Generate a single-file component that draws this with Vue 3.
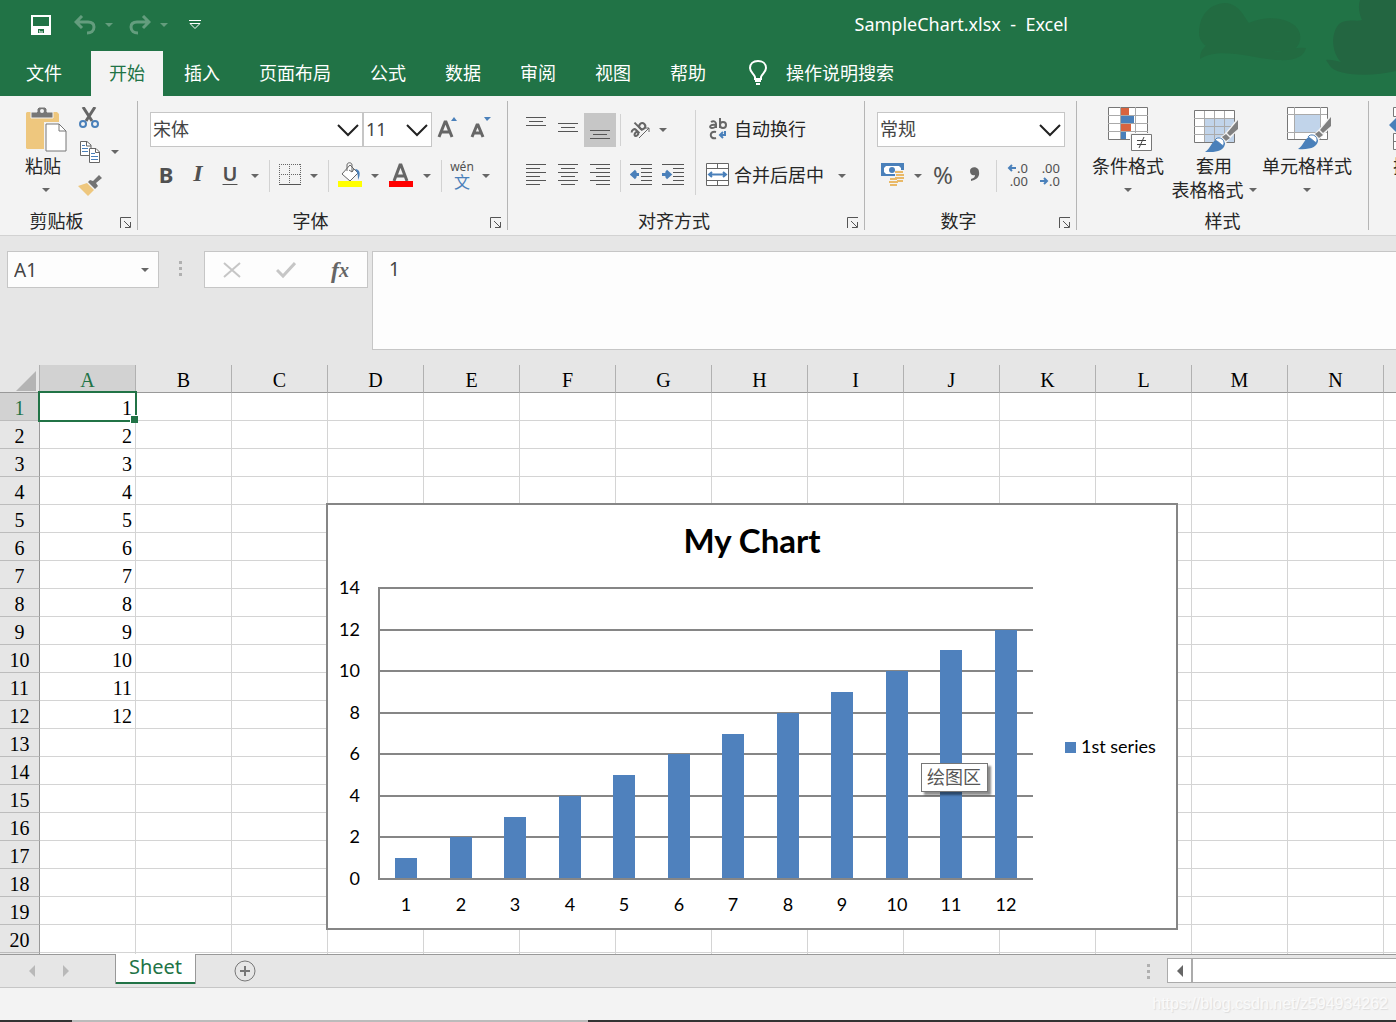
<script setup>
import { ref } from 'vue'

const tabs = ['文件', '开始', '插入', '页面布局', '公式', '数据', '审阅', '视图', '帮助']
const activeTab = ref('开始')
const columns = ['A', 'B', 'C', 'D', 'E', 'F', 'G', 'H', 'I', 'J', 'K', 'L', 'M', 'N']
const rows = Array.from({ length: 20 }, (_, i) => i + 1)
const values = [1, 2, 3, 4, 5, 6, 7, 8, 9, 10, 11, 12]
const cellName = ref('A1')
const formula = ref('1')

const base = 374
const unit = 291 / 14
const ticks = [0, 2, 4, 6, 8, 10, 12, 14].map((v) => ({ v, y: Math.round(base - v * unit) }))
const bars = values.map((v, i) => ({
  v,
  x: Math.round(67 + i * 54.5),
  y: Math.round(base - v * unit),
}))
</script>

<template>
  <div class="app">
    <header class="top">
      <svg class="swirl" width="250" height="96" viewBox="0 0 250 96" aria-hidden="true">
        <path d="M53 32C54 14 64 4 79 3C93 4 97 15 103 23C114 18 130 16 143 22C156 28 157 40 150 48C145 52 135 51 126 52C139 53 147 46 160 48C158 57 148 61 132 60C108 59 74 46 54 59C54 52 57 48 60 46C55 42 53 38 53 32Z" fill="#226b41" />
        <path d="M214 0H250V71C226 77 190 76 184 66L180 60C184 59 190 61 195 62C186 53 184 34 193 24C200 18 210 22 216 20C213 13 212 6 214 0Z" fill="#236641" />
      </svg>
      <div class="titlebar">
        <div class="quick">
          <button aria-label="保存"><svg width="20" height="20" viewBox="0 0 20 20"><path d="M1 1H19V19H1Z" fill="none" stroke="#fff" stroke-width="2" /><path d="M1 11H19V20H13V14H7V20H1Z" fill="#fff" /><path d="M8 16H9V19H11V16" fill="none" stroke="#fff" /></svg></button>
          <button class="dim undo" aria-label="撤消"><svg width="22" height="20" viewBox="0 0 22 20"><path d="M8 1L2 7L8 13M3 7H14C18 7 20 9 20 12C20 16 17 18 13 18" fill="none" stroke="#fff" stroke-width="3" /></svg></button>
          <button class="dim drop" aria-label="撤消列表"><i class="caret light"></i></button>
          <button class="dim redo" aria-label="恢复"><svg width="22" height="20" viewBox="0 0 22 20"><path d="M14 1L20 7L14 13M19 7H8C4 7 2 9 2 12C2 16 5 18 9 18" fill="none" stroke="#fff" stroke-width="3" /></svg></button>
          <button class="dim drop" aria-label="恢复列表"><i class="caret light"></i></button>
          <button class="custom" aria-label="自定义快速访问工具栏"><svg width="12" height="10" viewBox="0 0 12 10"><path d="M0 .5H12M1 3.500H11L6 8.500Z" fill="none" stroke="#fff" /></svg></button>
        </div>
        <h1>SampleChart.xlsx&nbsp; -&nbsp; Excel</h1>
      </div>
      <nav class="tabs">
        <button v-for="t in tabs" :key="t" :class="{ active: t === activeTab, file: t === '文件' }" @click="activeTab = t">{{ t }}</button>
        <button class="search">
          <svg width="20" height="26" viewBox="0 0 20 26"><path d="M7 19V17C6 14 2 12 2 8C2 4 5 1 10 1S18 4 18 8C18 12 14 14 13 17V19Z" fill="none" stroke="#fff" stroke-width="2" /><path d="M7 21H13M8 24H12" stroke="#fff" stroke-width="2" /></svg>
          <span>操作说明搜索</span>
        </button>
      </nav>
    </header>

    <section class="ribbon">
      <div class="group clip">
        <div class="body">
          <button class="big paste">
            <svg width="42" height="45" viewBox="0 0 42 45">
              <path d="M2 5H32L34 7V42H2L1 41V6Z" fill="#eec77e" />
              <path d="M6 5H12V2L14 0H20L22 2V5H28V11H6Z" fill="#777" stroke="#f3f3f3" /><circle cx="17" cy="4" r="2" fill="#f3f3f3" />
              <path d="M19 15H36L42 21V45H19Z" fill="#f3f3f3" /><path d="M21 17H34L41 24V44H21Z" fill="#fff" stroke="#777" /><path d="M34 17V24H41" fill="none" stroke="#777" />
            </svg>
            <span>粘贴</span>
            <i class="caret"></i>
          </button>
          <div class="side">
            <button aria-label="剪切"><svg width="22" height="22" viewBox="0 0 22 22"><path d="M5 0L14 14M17 0L8 14" stroke="#666" stroke-width="3" /><circle cx="5" cy="17" r="3" fill="none" stroke="#4a80ba" stroke-width="2" /><circle cx="17" cy="17" r="3" fill="none" stroke="#4a80ba" stroke-width="2" /></svg></button>
            <div class="pair">
              <button aria-label="复制"><svg width="22" height="24" viewBox="0 0 22 24"><path d="M2.500 1.500H9L13 5V15.500H2.500Z" fill="#fff" stroke="#666" /><path d="M8.500 1V6H13" fill="none" stroke="#666" /><path d="M4 5.500H7M4 8.500H10M4 11.500H10" stroke="#4a80ba" /><path d="M11.500 8.500H18L21.500 12V22.500H11.500Z" fill="#fff" stroke="#666" /><path d="M17.500 8V12.500H21" fill="none" stroke="#666" /><path d="M13 13.500H17M13 16.500H20M13 19.500H20" stroke="#4a80ba" /></svg></button>
              <button class="drop" aria-label="复制选项"><i class="caret"></i></button>
            </div>
            <button aria-label="格式刷"><svg width="24" height="22" viewBox="0 0 24 22"><path d="M21 0L24 3L18 8L20 11L17 14L10 7L12 5L15 6Z" fill="#737373" /><path d="M9 8L16 15L10 21L0 11Z" fill="#eec77e" /></svg></button>
          </div>
        </div>
        <footer><span>剪贴板</span><button class="launch" aria-label="剪贴板设置"><svg width="12" height="12" viewBox="0 0 12 12"><path d="M.5 11V.5H11M4 4L10 10M10.500 5V10.500H5" fill="none" stroke="#555" /></svg></button></footer>
      </div>
      <i class="divider"></i>

      <div class="group font">
        <div class="rows">
          <div class="row">
            <label class="combo name"><select aria-label="字体"><option>宋体</option></select><svg width="22" height="14" viewBox="0 0 22 14"><path d="M1 2L11 12L21 2" fill="none" stroke="#222" stroke-width="2" /></svg></label>
            <label class="combo size"><select aria-label="字号"><option>11</option></select><svg width="22" height="14" viewBox="0 0 22 14"><path d="M1 2L11 12L21 2" fill="none" stroke="#222" stroke-width="2" /></svg></label>
            <button class="tool" aria-label="增大字号"><svg width="22" height="24" viewBox="0 0 22 24"><path d="M2 20L8 5H9L15 20M4 15H13" fill="none" stroke="#666" stroke-width="3" /><path d="M14 4L17 0L20 4Z" fill="#4a80ba" /></svg></button>
            <button class="tool" aria-label="减小字号"><svg width="22" height="24" viewBox="0 0 22 24"><path d="M3 20L8 8H9L14 20M5 16H12" fill="none" stroke="#666" stroke-width="3" /><path d="M15 0H22L18 4Z" fill="#4a80ba" /></svg></button>
          </div>
          <div class="row">
            <button class="tool bold">B</button>
            <button class="tool italic">I</button>
            <button class="tool under">U</button>
            <button class="drop" aria-label="下划线选项"><i class="caret"></i></button>
            <i class="sep"></i>
            <button class="tool slim" aria-label="边框"><svg width="22" height="22" viewBox="0 0 22 22"><path d="M0 .5H22M.5 0V22M21.500 0V22M0 10.500H22M10.500 0V22" fill="none" stroke="#666" stroke-dasharray="1 1" /><path d="M0 20.500H22" stroke="#555" /></svg></button>
            <button class="drop" aria-label="边框选项"><i class="caret"></i></button>
            <i class="sep"></i>
            <button class="tool" aria-label="填充颜色"><svg width="24" height="26" viewBox="0 0 24 26"><path d="M12 3L4 12L12 19L20 11Z" fill="#fff" stroke="#666" /><path d="M9 9V3C9 0 14 0 14 3V10M11 8L14 10L16 7" fill="none" stroke="#666" /><path d="M17 7C22 7 23 12 20 18C20 14 20 11 17 7Z" fill="#4a80ba" /><path d="M0 19H24V25H0Z" fill="#ff0" /></svg></button>
            <button class="drop" aria-label="填充颜色选项"><i class="caret"></i></button>
            <button class="tool wide" aria-label="字体颜色"><svg width="24" height="26" viewBox="0 0 24 26"><path d="M5 19L11 3H12L18 19M7 14H16" fill="none" stroke="#666" stroke-width="3" /><path d="M0 19H24V25H0Z" fill="#f00" /></svg></button>
            <button class="drop" aria-label="字体颜色选项"><i class="caret"></i></button>
            <i class="sep"></i>
            <button class="tool slim phon"><span>wén</span><b>文</b></button>
            <button class="drop" aria-label="拼音选项"><i class="caret"></i></button>
          </div>
        </div>
        <footer><span>字体</span><button class="launch" aria-label="字体设置"><svg width="12" height="12" viewBox="0 0 12 12"><path d="M.5 11V.5H11M4 4L10 10M10.500 5V10.500H5" fill="none" stroke="#555" /></svg></button></footer>
      </div>
      <i class="divider"></i>

      <div class="group align">
        <div class="split">
          <div class="rows left">
            <div class="row">
              <button class="tool" aria-label="顶端对齐"><svg width="22" height="26" viewBox="0 0 22 26"><path d="M1 1.500H21M4 5.500H18M1 9.500H21" stroke="#555" /></svg></button>
              <button class="tool" aria-label="垂直居中"><svg width="22" height="26" viewBox="0 0 22 26"><path d="M1 7.500H21M4 11.500H18M1 15.500H21" stroke="#555" /></svg></button>
              <button class="tool chosen" aria-label="底端对齐"><svg width="22" height="26" viewBox="0 0 22 26"><path d="M1 13.500H21M4 17.500H18M1 21.500H21" stroke="#555" /></svg></button>
              <i class="sep near"></i>
              <button class="tool" aria-label="方向"><svg width="24" height="24" viewBox="0 0 24 24"><g transform="rotate(-45 9 12)" fill="none" stroke="#666" stroke-width="2"><path d="M2 10C4 8 7 9 7 11V16M7 13C1 12 1 16 4 16C6 16 7 15 7 13M11 5V16" /><circle cx="14" cy="13" r="3" /></g><path d="M10 21L20 11M16 11H20V15" fill="none" stroke="#666" /></svg></button>
              <button class="drop tight" aria-label="方向选项"><i class="caret"></i></button>
            </div>
            <div class="row">
              <button class="tool" aria-label="左对齐"><svg width="22" height="22" viewBox="0 0 22 22"><path d="M1 .5H21M1 4.500H15M1 8.500H21M1 12.500H15M1 16.500H21M1 20.500H15" stroke="#555" /></svg></button>
              <button class="tool" aria-label="居中"><svg width="22" height="22" viewBox="0 0 22 22"><path d="M1 .5H21M4 4.500H18M1 8.500H21M4 12.500H18M1 16.500H21M4 20.500H18" stroke="#555" /></svg></button>
              <button class="tool" aria-label="右对齐"><svg width="22" height="22" viewBox="0 0 22 22"><path d="M1 .5H21M7 4.500H21M1 8.500H21M7 12.500H21M1 16.500H21M7 20.500H21" stroke="#555" /></svg></button>
              <i class="sep near"></i>
              <button class="tool" aria-label="减少缩进量"><svg width="22" height="22" viewBox="0 0 22 22"><path d="M0 .5H22M11 4.500H22M11 8.500H22M11 12.500H22M11 16.500H22M0 20.500H22" stroke="#555" /><path d="M9 10.500H3M6 7L2 10.500L6 14" stroke="#4a80ba" stroke-width="3" fill="none" /></svg></button>
              <button class="tool" aria-label="增加缩进量"><svg width="22" height="22" viewBox="0 0 22 22"><path d="M0 .5H22M11 4.500H22M11 8.500H22M11 12.500H22M11 16.500H22M0 20.500H22" stroke="#555" /><path d="M0 10.500H7M4 7L8 10.500L4 14" stroke="#4a80ba" stroke-width="3" fill="none" /></svg></button>
            </div>
          </div>
          <i class="tall"></i>
          <div class="rows">
            <button class="row text"><svg width="24" height="24" viewBox="0 0 24 24"><g fill="none" stroke="#666" stroke-width="2"><path d="M5 5C8 3 10 5 10 7V11M10 8C3 7 3 11 6 11C9 11 10 9 10 8M14 1V11" /><circle cx="17" cy="8" r="3" /><path d="M10 15C3 13 3 23 10 21" stroke-width="2" /></g><path d="M19 14V18H14M17 15L14 18L17 21" fill="none" stroke="#4a80ba" stroke-width="2" /></svg><span>自动换行</span></button>
            <div class="row">
              <button class="row text"><svg width="24" height="24" viewBox="0 0 24 24"><path d="M.5 .5H22.500V22.500H.5ZM.5 5.500H22.500M.5 17.500H22.500M11.500 0V5M11.500 18V23" fill="#fff" stroke="#666" /><path d="M3 11.500H20M6 9L3 11.500L6 14M17 9L20 11.500L17 14" fill="none" stroke="#4a80ba" stroke-width="2" /></svg><span>合并后居中</span></button>
              <button class="drop apart" aria-label="合并选项"><i class="caret"></i></button>
            </div>
          </div>
        </div>
        <footer><span>对齐方式</span><button class="launch" aria-label="对齐设置"><svg width="12" height="12" viewBox="0 0 12 12"><path d="M.5 11V.5H11M4 4L10 10M10.500 5V10.500H5" fill="none" stroke="#555" /></svg></button></footer>
      </div>
      <i class="divider"></i>

      <div class="group number">
        <div class="rows">
          <div class="row">
            <label class="combo format"><select aria-label="数字格式"><option>常规</option></select><svg width="22" height="14" viewBox="0 0 22 14"><path d="M1 2L11 12L21 2" fill="none" stroke="#222" stroke-width="2" /></svg></label>
          </div>
          <div class="row">
            <button class="tool" aria-label="会计数字格式"><svg width="24" height="24" viewBox="0 0 24 24"><path d="M0 0H23V13H0Z" fill="#4a80ba" /><path d="M5 3H18L20 5V9L18 11H5L3 9V5Z" fill="#fff" /><circle cx="11" cy="7" r="3" fill="#4a80ba" /><path d="M14 7H23V18H17V23H8V14H14Z" fill="#f3f3f3" /><path d="M14 9H22M15 12H23M14 15H23M16 18H22M9 16H16M8 19H17M9 22H16" stroke="#e9b968" stroke-width="2" /></svg></button>
            <button class="drop" aria-label="会计格式选项"><i class="caret"></i></button>
            <button class="tool percent">%</button>
            <button class="tool" aria-label="千位分隔样式"><svg width="12" height="16" viewBox="0 0 12 16"><path d="M10 5C11 10 7 13 2 14V12C5 11 6 10 6 8C3 9 1 7 1 4C1 -1 10 -1 10 5Z" fill="#666" /></svg></button>
            <i class="sep"></i>
            <button class="tool dec"><span><svg width="10" height="8" viewBox="0 0 10 8"><path d="M9 4H2M5 1L2 4L5 7" fill="none" stroke="#4a80ba" stroke-width="2" /></svg>.0</span><span>.00</span></button>
            <button class="tool dec"><span>.00</span><span><svg width="10" height="8" viewBox="0 0 10 8"><path d="M1 4H8M5 1L8 4L5 7" fill="none" stroke="#4a80ba" stroke-width="2" /></svg>.0</span></button>
          </div>
        </div>
        <footer><span>数字</span><button class="launch" aria-label="数字设置"><svg width="12" height="12" viewBox="0 0 12 12"><path d="M.5 11V.5H11M4 4L10 10M10.500 5V10.500H5" fill="none" stroke="#555" /></svg></button></footer>
      </div>
      <i class="divider"></i>

      <div class="group styles">
        <div class="body">
          <button class="big cond">
            <svg width="48" height="45" viewBox="-4 0 48 45">
              <path d="M.5 .5H39.500V32.500H.5Z" fill="#fff" stroke="#777" /><path d="M0 8.500H40M0 16.500H40M0 24.500H40M12.500 0V32M27.500 0V32" stroke="#aaa" />
              <path d="M13 1H21V8H13ZM13 17H23V24H13Z" fill="#d8643f" /><path d="M13 9H26V16H13ZM13 25H18V32H13Z" fill="#4a80ba" />
              <path d="M22 26H44V45H22Z" fill="#f3f3f3" /><path d="M23.500 27.500H43.500V43.500H23.500Z" fill="#fff" stroke="#777" /><path d="M29 33.500H38M29 37.500H38M36 30L31 41" stroke="#444" />
            </svg>
            <span>条件格式</span><i class="caret"></i>
          </button>
          <button class="big">
            <svg width="48" height="45" viewBox="-4 0 48 45">
              <path d="M.5 3.500H40.500V35.500H.5Z" fill="#fff" stroke="#777" /><path d="M11 12H40V35H11Z" fill="#c1d4ea" /><path d="M0 11.500H40M0 19.500H40M0 27.500H40M10.500 4V35M20.500 4V35M30.500 4V35" stroke="#aaa" />
              <path d="M12 45L22 33C26 31 31 28 44 10V23L32 36C29 43 22 45 12 45Z" fill="#f3f3f3" />
              <path d="M44 13V22L36 29L33 26Z" fill="#808080" /><path d="M32 27L36 31L32 34L28 30Z" fill="#808080" /><path d="M11 45C17 42 17 33 25 32L31 36C31 43 23 46 11 45Z" fill="#4a80ba" /><path d="M21 33C23 29 31 31 30 37C29 41 26 35 21 33Z" fill="#fff" stroke="#4a80ba" />
            </svg>
            <span>套用</span><span class="line">表格格式<i class="caret"></i></span>
          </button>
          <button class="big cell">
            <svg width="48" height="45" viewBox="-4 0 48 45">
              <path d="M.5 .5H40.500V32.500H.5Z" fill="#fff" stroke="#777" /><path d="M0 7.500H40M0 25.500H40M7.500 0V32M33.500 0V32" stroke="#aaa" /><path d="M8 8H33V25H8Z" fill="#c1d4ea" />
              <path d="M12 42L22 30C26 28 31 25 44 7V20L32 33C29 40 22 42 12 42Z" fill="#f3f3f3" />
              <path d="M44 10V19L36 26L33 23Z" fill="#808080" /><path d="M32 24L36 28L32 31L28 27Z" fill="#808080" /><path d="M11 42C17 39 17 30 25 29L31 33C31 40 23 43 11 42Z" fill="#4a80ba" /><path d="M21 30C23 26 31 28 30 34C29 38 26 32 21 30Z" fill="#fff" stroke="#4a80ba" />
            </svg>
            <span>单元格样式</span><i class="caret"></i>
          </button>
        </div>
        <footer><span>样式</span></footer>
      </div>
      <i class="divider"></i>
      <div class="group cells">
        <button class="big insert">
          <svg width="44" height="45" viewBox="0 0 44 45"><path d="M4.500 .5H40.500V9.500H4.500ZM4.500 26.500H40.500V42.500H4.500ZM4 34.500H40" fill="#fff" stroke="#777" /><path d="M0 18L10 8V15H30V21H10V28Z" fill="#4a80ba" /></svg>
          <span>插入</span>
        </button>
      </div>
    </section>

    <section class="formula-bar">
      <label class="name-box"><input v-model="cellName" aria-label="名称框" /><i class="caret"></i></label>
      <i class="dots"></i>
      <div class="fx">
        <button aria-label="取消"><svg width="20" height="18" viewBox="0 0 20 18"><path d="M2 2L18 16M18 2L2 16" stroke="#c6c6c6" stroke-width="2" /></svg></button>
        <button aria-label="输入"><svg width="20" height="18" viewBox="0 0 20 18"><path d="M1 9L7 15L19 2" fill="none" stroke="#c6c6c6" stroke-width="3" /></svg></button>
        <button class="fn"><span>f</span><small>x</small></button>
      </div>
      <textarea v-model="formula" aria-label="编辑栏"></textarea>
    </section>

    <main class="sheet">
      <table>
        <colgroup><col class="head-col" /><col v-for="c in columns" :key="c" class="data-col" /><col class="data-col" /></colgroup>
        <thead>
          <tr>
            <th class="corner"><svg width="20" height="20" viewBox="0 0 20 20" aria-hidden="true"><path d="M20 0V20H0Z" fill="#b4b4b4" /></svg></th>
            <th v-for="c in columns" :key="c" scope="col" :class="{ on: c === 'A' }">{{ c }}</th>
            <th></th>
          </tr>
        </thead>
        <tbody>
          <tr v-for="r in rows" :key="r">
            <th scope="row" :class="{ on: r === 1 }">{{ r }}</th>
            <td v-for="c in columns" :key="c" :class="{ picked: r === 1 && c === 'A' }">{{ c === 'A' ? values[r - 1] : '' }}</td>
            <td></td>
          </tr>
          <tr><th></th><td v-for="c in columns" :key="c"></td><td></td></tr>
        </tbody>
      </table>

      <figure class="chart">
        <svg width="848" height="423" viewBox="0 0 848 423" role="img" aria-label="My Chart">
          <text class="chart-title" x="424" y="48" text-anchor="middle">My Chart</text>
          <g stroke="#868686" stroke-width="2" shape-rendering="crispEdges">
            <line v-for="t in ticks" :key="t.v" x1="50" x2="705" :y1="t.y" :y2="t.y" />
          </g>
          <rect v-for="b in bars" :key="b.v" :x="b.x" :y="b.y" width="22" :height="base - 1 - b.y" fill="#4f81bd" />
          <path d="M51 82V375" stroke="#868686" stroke-width="2" />
          <text v-for="t in ticks" :key="'y' + t.v" x="32" :y="t.y + 6" text-anchor="end">{{ t.v }}</text>
          <text v-for="b in bars" :key="'x' + b.v" :x="b.x + 11" y="406" text-anchor="middle">{{ b.v }}</text>
          <rect x="737" y="237" width="11" height="11" fill="#4f81bd" />
          <text x="753" y="248">1st series</text>
        </svg>
        <div class="tip" role="tooltip">绘图区</div>
      </figure>
    </main>

    <div class="sheet-bar">
      <button class="nav" aria-label="上一个"><svg width="8" height="12" viewBox="0 0 8 12"><path d="M7 0V12L1 6Z" fill="#b9b9b9" /></svg></button>
      <button class="nav" aria-label="下一个"><svg width="8" height="12" viewBox="0 0 8 12"><path d="M1 0V12L7 6Z" fill="#b9b9b9" /></svg></button>
      <button class="sheet-tab">Sheet</button>
      <button class="add" aria-label="新工作表"><svg width="24" height="24" viewBox="0 0 24 24"><circle cx="12" cy="12" r="10" fill="none" stroke="#777" stroke-width="1" /><path d="M12 7V17M7 12H17" stroke="#777" stroke-width="2" /></svg></button>
      <i class="dots"></i>
      <div class="scroll"><button aria-label="向左滚动"><svg width="8" height="12" viewBox="0 0 8 12"><path d="M7 0V12L1 6Z" fill="#666" /></svg></button><div class="track"></div></div>
    </div>
    <footer class="status"><span>https://blog.csdn.net/z594934262</span></footer>
  </div>
</template>

<style>
body {
  margin: 0;
}
</style>

<style scoped>
.app {
  display: flex;
  flex-direction: column;
  height: 100vh;
  overflow: hidden;
  background: #e6e6e6;
  color: #262626;
  font: 18px/28px "Noto Sans", "Noto Sans CJK SC", sans-serif;
}
* {
  box-sizing: border-box;
}
svg {
  display: block;
  flex: none;
}
button {
  display: flex;
  align-items: center;
  justify-content: center;
  padding: 0;
  border: 0;
  background: none;
  color: inherit;
  font: inherit;
  white-space: nowrap;
}
select,
input,
textarea {
  min-width: 0;
  border: 0;
  border-radius: 0;
  outline: 0;
  background: none;
  color: #444;
  font: inherit;
  appearance: none;
}
.caret {
  flex: none;
  border: 4px solid transparent;
  border-top-color: #666;
  border-bottom: 0;
}
.caret.light {
  border-top-color: #fff;
}
.top {
  position: relative;
  background: #217346;
  color: #fff;
}
.swirl {
  position: absolute;
  top: 0;
  right: 0;
}
.titlebar {
  position: relative;
  display: flex;
  align-items: center;
  height: 51px;
  padding: 0 328px 4px 31px;
}
.quick {
  display: flex;
  align-items: center;
  padding-top: 2px;
}
.quick .dim {
  opacity: 0.3;
}
.quick .drop {
  width: 26px;
}
.quick .undo {
  margin-left: 23px;
}
.quick .redo {
  margin-left: 7px;
}
.quick .custom {
  margin-left: 12px;
}
h1 {
  margin: 0 0 0 auto;
  font-size: 18px;
  font-weight: 400;
  line-height: 28px;
}
.tabs {
  position: relative;
  display: flex;
  gap: 3px;
  height: 45px;
  padding-left: 8px;
}
.tabs button {
  padding: 0 18px 2px;
}
.tabs .file {
  margin-right: 8px;
}
.tabs .active {
  background: #f3f3f3;
  color: #217346;
}
.tabs .search {
  gap: 18px;
  padding-left: 21px;
}
.ribbon {
  display: flex;
  flex: none;
  overflow: hidden;
  padding-top: 5px;
  border-bottom: 1px solid #d2d2d2;
  background: #f3f3f3;
}
.group {
  display: flex;
  flex: none;
  flex-direction: column;
  justify-content: space-between;
  height: 134px;
}
.clip {
  width: 137px;
}
.font {
  width: 369px;
}
.align {
  width: 356px;
}
.number {
  width: 211px;
}
.styles {
  width: 291px;
}
.divider {
  flex: none;
  width: 1px;
  height: 129px;
  background: #b5b5b5;
}
.group footer {
  display: flex;
  height: 28px;
  align-items: center;
}
.group footer span {
  flex: 1;
  text-align: center;
}
.launch {
  width: 24px;
  height: 28px;
  padding: 3px 0 0 2px;
}
.body {
  display: flex;
}
.big {
  flex-direction: column;
  justify-content: flex-start;
  padding-top: 6px;
  line-height: 24px;
}
.big svg {
  margin-bottom: 2px;
}
.big > .caret {
  margin-top: 10px;
}
.paste {
  margin-left: 25px;
  width: 42px;
}
.paste > span {
  align-self: flex-start;
}
.styles .body {
  padding-left: 8px;
}
.styles .big {
  width: 86px;
}
.styles .cell {
  width: 100px;
}
.line {
  display: flex;
  align-items: center;
  gap: 5px;
}
.cells {
  padding-left: 20px;
}
.insert {
  align-items: flex-start;
}
.insert span {
  padding-left: 4px;
}
.side {
  margin-left: 11px;
}
.side button {
  height: 34px;
}
.side .drop {
  width: 30px;
}
.pair {
  display: flex;
}
.rows {
  display: flex;
  flex-direction: column;
  gap: 11px;
  padding-top: 11px;
}
.row {
  display: flex;
  align-items: center;
  height: 35px;
}
.font .rows,
.number .rows {
  padding-left: 12px;
}
.split {
  display: flex;
}
.left {
  width: 181px;
  padding-left: 12px;
}
.text {
  justify-content: flex-start;
  gap: 4px;
  padding-bottom: 1px;
}
.combo {
  display: grid;
  height: 35px;
  border: 1px solid #c6c6c6;
  background: #fff;
}
.combo > * {
  grid-area: 1 / 1;
}
.combo svg {
  align-self: center;
  justify-self: end;
  margin-right: 3px;
  pointer-events: none;
}
.combo select {
  width: 100%;
  padding: 0 2px 2px;
}
.name {
  width: 213px;
}
.size {
  width: 69px;
}
.format {
  width: 188px;
}
.tool {
  flex: none;
  width: 32px;
  height: 34px;
  padding-bottom: 2px;
  color: #505050;
}
.slim {
  width: 30px;
}
.wide {
  width: 34px;
}
.chosen {
  padding: 0;
  background: #c6c6c6;
}
.bold,
.under {
  padding-bottom: 4px;
  font-weight: 700;
  font-size: 22px;
}
.italic {
  padding-bottom: 4px;
  font: italic 700 24px "Liberation Serif", serif;
}
.under {
  font-weight: 600;
  font-size: 20px;
  text-decoration: underline;
  text-decoration-thickness: 1px;
  text-underline-offset: 3px;
}
.percent {
  font-size: 24px;
}
.phon {
  flex-direction: column;
  font-size: 12px;
  line-height: 14px;
}
.phon b {
  color: #4a80ba;
  font-size: 16px;
  font-weight: 400;
  line-height: 16px;
}
.dec {
  flex-direction: column;
  align-items: flex-end;
  padding-right: 6px;
  font-size: 13px;
  line-height: 13px;
}
.dec span {
  display: flex;
  align-items: center;
}
.drop {
  width: 18px;
  height: 34px;
}
.tight {
  width: 12px;
}
.apart {
  margin-left: 9px;
}
.sep {
  width: 1px;
  height: 32px;
  margin: 0 5px;
  background: #d2d2d2;
}
.near {
  margin: 0 4px;
}
.tall {
  width: 1px;
  height: 85px;
  margin: 9px 10px 0 6px;
  background: #d2d2d2;
}
.formula-bar {
  display: flex;
  flex: none;
  align-items: flex-start;
  padding: 15px 0 15px 7px;
}
.name-box,
.fx {
  display: flex;
  align-items: center;
  height: 37px;
  border: 1px solid #c6c6c6;
  background: #fdfdfd;
}
.name-box {
  width: 152px;
  padding: 0 9px 0 6px;
}
.name-box input {
  flex: 1;
  padding: 0;
  font-size: 19px;
}
.dots {
  width: 3px;
  height: 15px;
  background: repeating-linear-gradient(#b0b0b0 0 3px, transparent 3px 6px);
}
.formula-bar .dots {
  margin: 10px 22px 0 20px;
}
.fx {
  width: 164px;
}
.fx button {
  flex: 1;
}
.fn {
  color: #666;
  font: italic 700 24px/28px "Liberation Serif", serif;
}
.fn small {
  font-size: 20px;
}
textarea {
  flex: 1;
  height: 99px;
  margin-left: 4px;
  padding: 3px 16px;
  border: 1px solid #c6c6c6;
  border-right: 0;
  background: #fdfdfd;
  font-size: 19px;
  resize: none;
}
.sheet {
  position: relative;
  flex: 1;
  min-height: 0;
  overflow: hidden;
  background: #fff;
}
table {
  width: 1480px;
  border-spacing: 0;
  table-layout: fixed;
  color: #000;
  font: 20px/23px "Liberation Serif", "Noto Sans CJK SC", serif;
}
.head-col {
  width: 40px;
}
.data-col {
  width: 96px;
}
th,
td {
  height: 28px;
  padding: 4px 3px 0 0;
  border: 0 solid #d4d4d4;
  border-width: 0 1px 1px 0;
}
th {
  background: #e6e6e6;
  font-weight: 400;
}
thead th {
  padding: 4px 0 0;
  border-color: #b1b1b1;
  border-bottom-color: #999;
}
tbody th {
  padding: 4px 0 0;
  border-color: #bcbcbc;
  border-right-color: #999;
}
td {
  text-align: right;
}
th.on {
  background: #d2d2d2;
  color: #217346;
}
.corner svg {
  margin-left: 16px;
}
.picked {
  position: relative;
}
.picked::before {
  position: absolute;
  inset: -2px;
  border: 2px solid #217346;
  content: "";
}
.picked::after {
  position: absolute;
  right: -3px;
  bottom: -3px;
  width: 7px;
  height: 7px;
  border: 1px solid #fff;
  border-width: 1px 0 0 1px;
  background: #217346;
  content: "";
}
.chart {
  position: absolute;
  top: 138px;
  left: 326px;
  margin: 0;
  border: 2px solid #868686;
  background: #fff;
}
.chart text {
  fill: #000;
  font: 18px Lato, sans-serif;
}
.chart .chart-title {
  font-size: 33px;
  font-weight: 700;
}
.tip {
  position: absolute;
  top: 258px;
  left: 593px;
  padding: 0 6px 0 5px;
  border: 1px solid #767676;
  background: #fff;
  box-shadow: 3px 3px 2px rgba(0, 0, 0, 0.45);
  color: #575757;
  line-height: 27px;
}
.sheet-bar {
  display: flex;
  flex: none;
  height: 34px;
  align-items: center;
  padding-left: 15px;
  border-top: 1px solid #999;
  border-bottom: 1px solid #c6c6c6;
}
.nav {
  width: 34px;
  height: 24px;
}
.sheet-tab {
  align-self: flex-start;
  width: 81px;
  height: 30px;
  margin: -1px 37px 0 32px;
  padding-bottom: 4px;
  border: 1px solid #999;
  border-width: 0 1px;
  background: #fff;
  box-shadow: inset 0 -2px #217346;
  color: #217346;
  font-size: 20px;
}
.sheet-bar .dots {
  margin: 0 17px 0 auto;
}
.scroll {
  display: flex;
  width: 229px;
  height: 25px;
  margin-bottom: 1px;
  border: 1px solid #ababab;
  border-right: 0;
  background: #fff;
}
.scroll button {
  width: 25px;
  border-right: 2px solid #ababab;
}
.track {
  flex: 1;
}
.status {
  display: flex;
  flex: none;
  height: 34px;
  align-items: center;
  justify-content: flex-end;
  padding: 0 8px 2px;
  background: linear-gradient(90deg, #333 72px, #bbb 72px 588px, #333 588px) bottom / 100% 2px no-repeat #f3f3f3;
  color: #fafafa;
  font: 16px "Liberation Sans", sans-serif;
  text-shadow: 1px 1px 1px #dcdcdc;
}
</style>
